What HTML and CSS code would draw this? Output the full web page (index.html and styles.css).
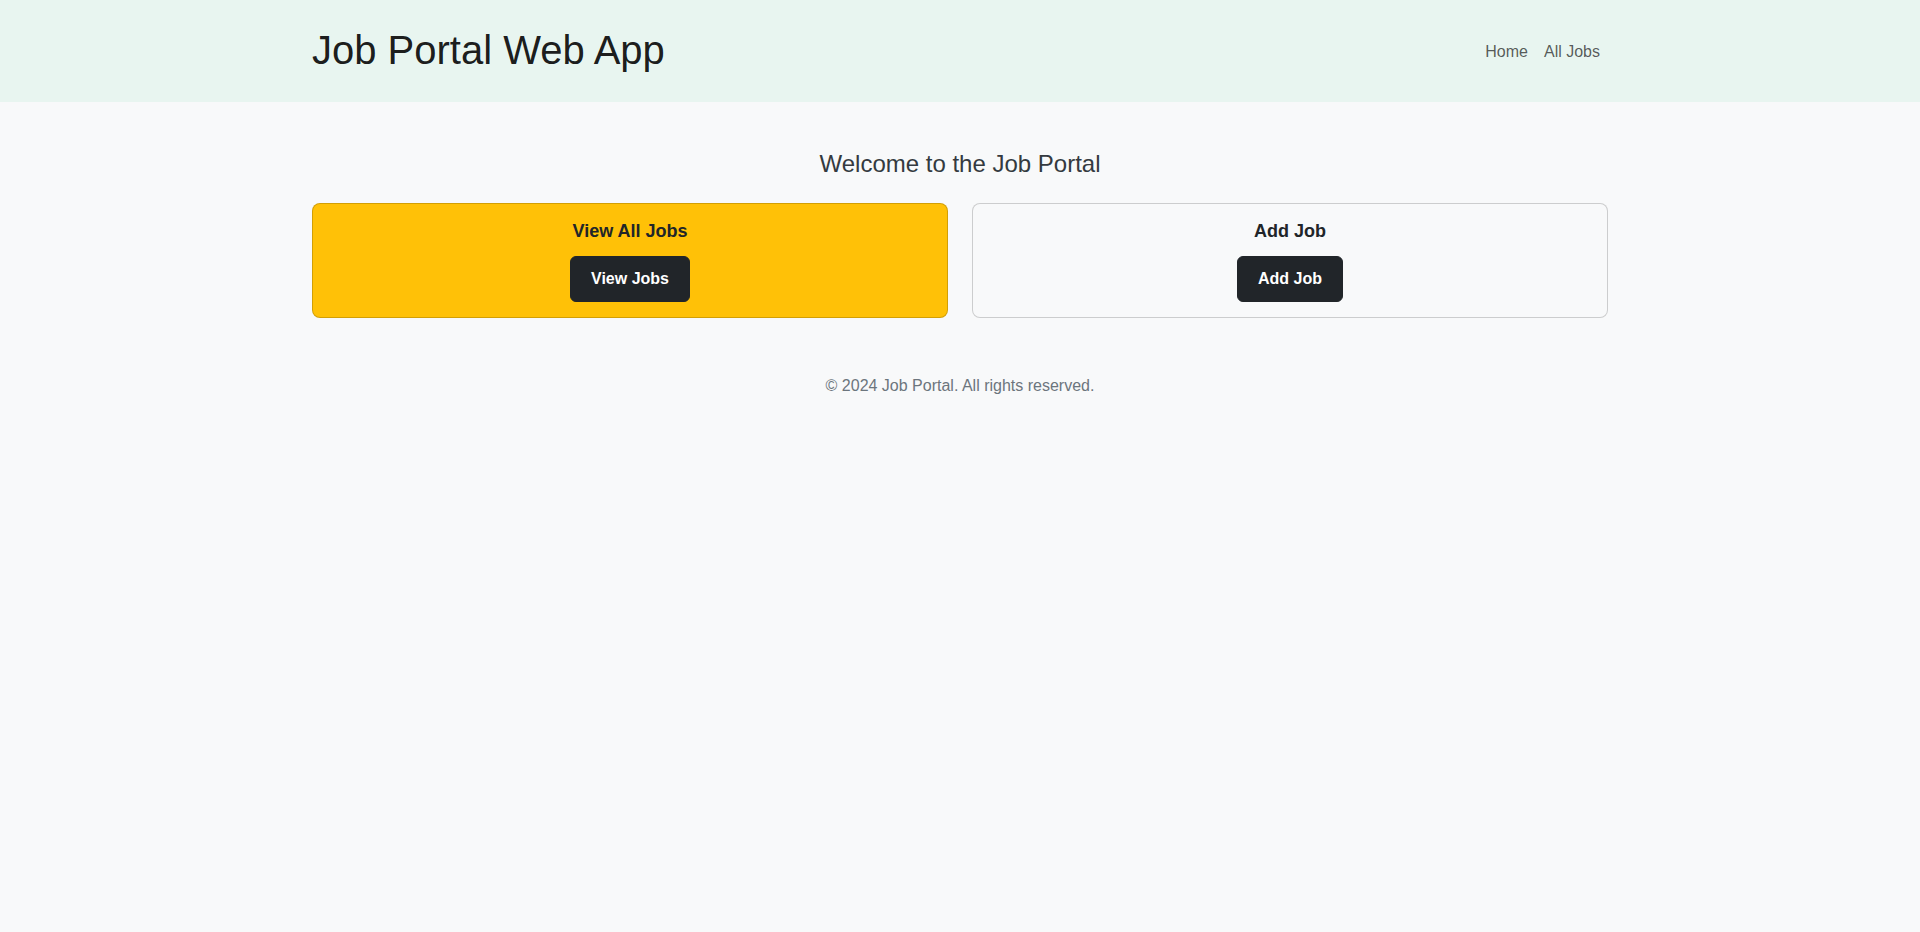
FILE: index.html
```html
<!DOCTYPE html>
<html lang="en">
<head>
<meta charset="utf-8">
<title>Job Portal Web App</title>
<link rel="stylesheet" href="styles.css">
</head>
<body>
<header class="site-header">
  <div class="container header-inner">
    <h1 class="brand">Job Portal Web App</h1>
    <nav class="nav">
      <a class="nav-link" href="#">Home</a>
      <a class="nav-link" href="#">All Jobs</a>
    </nav>
  </div>
</header>
<main class="container main">
  <h2 class="welcome">Welcome to the Job Portal</h2>
  <div class="cards">
    <div class="card card-warning">
      <h5 class="card-title">View All Jobs</h5>
      <a class="btn" href="#">View Jobs</a>
    </div>
    <div class="card card-plain">
      <h5 class="card-title">Add Job</h5>
      <a class="btn" href="#">Add Job</a>
    </div>
  </div>
</main>
<footer class="footer">
  <p class="footer-text">© 2024 Job Portal. All rights reserved.</p>
</footer>
</body>
</html>
```
FILE: styles.css
```css
* { box-sizing: border-box; }
html, body { margin: 0; padding: 0; }
body {
  background: #f8f9fa;
  font-family: "Liberation Sans", Arial, sans-serif;
  font-size: 16px;
  line-height: 1.5;
  color: #212529;
}
.container {
  width: 1296px;
  margin: 0 auto;
}
.site-header {
  background: #e8f5f0;
  padding: 26px 0 24px;
}
.header-inner {
  display: flex;
  align-items: center;
  justify-content: space-between;
}
.brand {
  margin: 0 0 4px;
  font-size: 40px;
  font-weight: 400;
  line-height: 1.2;
  color: rgba(0,0,0,.9);
}
.nav {
  display: flex;
}
.nav-link {
  padding: 8px 8px;
  color: rgba(0,0,0,.65);
  text-decoration: none;
  font-size: 16px;
  line-height: 24px;
}
.main {
  padding-top: 48px;
}
.welcome {
  margin: 0 0 24px;
  text-align: center;
  font-size: 24px;
  font-weight: 400;
  line-height: 1.2;
  color: #343a40;
}
.cards {
  display: grid;
  grid-template-columns: 1fr 1fr;
  gap: 24px;
}
.card {
  border: 1px solid rgba(0,0,0,.175);
  border-radius: 8px;
  padding: 17px 15px 15px;
  text-align: center;
  height: 115px;
}
.card-warning { background: #ffc107; }
.card-plain { background: #f8f9fa; }
.card-title {
  margin: 0 0 14px;
  font-size: 18px;
  font-weight: 700;
  line-height: 21px;
  color: #212529;
}
.btn {
  display: inline-block;
  padding: 10px 20px;
  background: #212529;
  border: 1px solid #212529;
  border-radius: 6px;
  color: #fff;
  font-weight: 700;
  font-size: 16px;
  line-height: 24px;
  text-decoration: none;
}
.footer {
  margin-top: 56px;
  text-align: center;
}
.footer-text {
  margin: 0;
  color: #6c757d;
  font-size: 16px;
  line-height: 24px;
}
```
